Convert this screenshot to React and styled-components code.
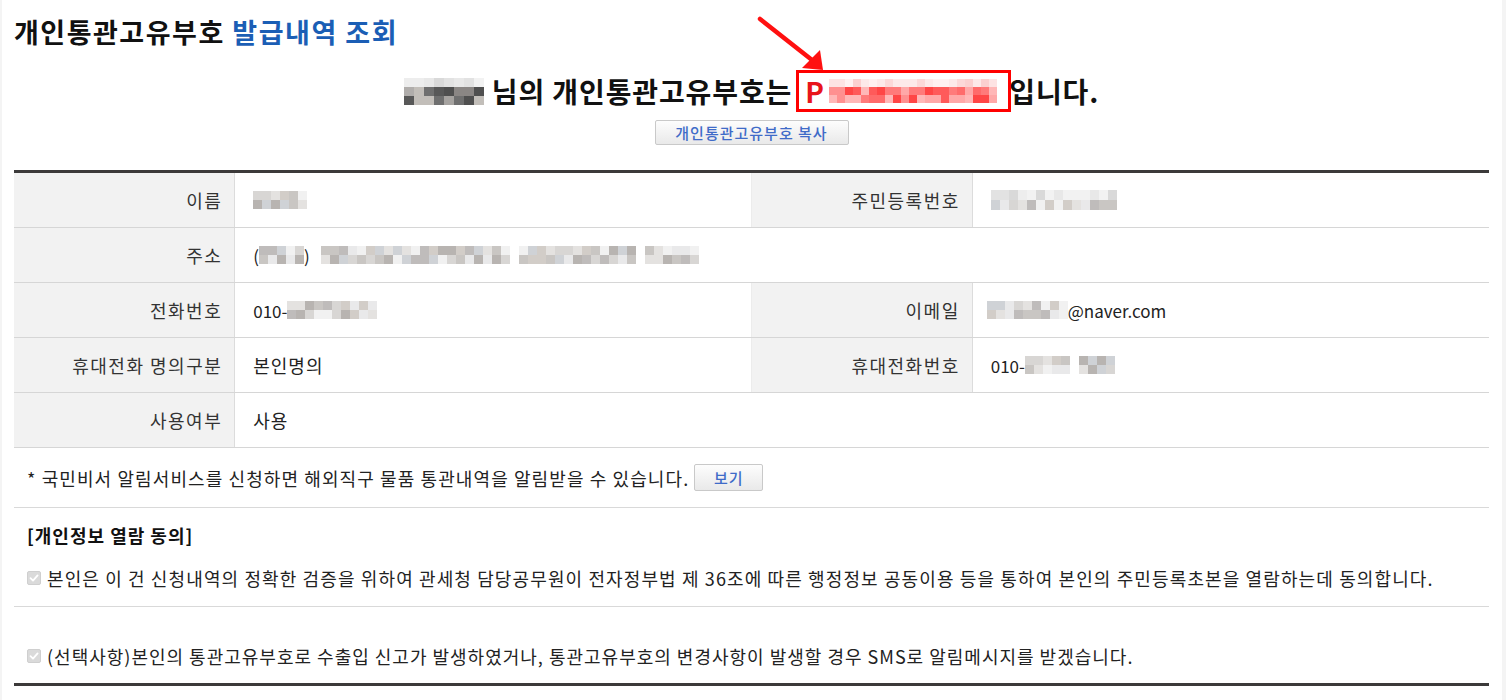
import React from 'react';
import styled, { createGlobalStyle } from 'styled-components';

const GlobalStyle = createGlobalStyle`
  html, body {
    margin: 0;
    padding: 0;
    background: #f4f4f4;
  }
  body {
    font-family: "Noto Sans CJK KR", "Noto Sans", sans-serif;
    color: #222;
  }
`;

const Page = styled.div`
  margin: 0 4px 0 2px;
  padding: 14px 13px 0 12px;
  min-height: 700px;
  box-sizing: border-box;
  background: #fff;
`;

const Title = styled.h1`
  margin: 0;
  height: 36px;
  line-height: 36px;
  font-size: 27px;
  font-weight: 700;
  letter-spacing: 1.5px;
  color: #111;
`;

const Blue = styled.span`
  color: #1b5eb5;
`;

const Hero = styled.div`
  margin-top: 20px;
  display: flex;
  justify-content: center;
  align-items: center;
  height: 42px;
  font-size: 28px;
  font-weight: 700;
  color: #111;
  letter-spacing: 0.9px;
`;

const HeroText = styled.span`
  margin-left: ${p => p.$gap || 0}px;
  margin-right: ${p => p.$after || 0}px;
  white-space: nowrap;
`;

const CodeBox = styled.div`
  position: relative;
  display: flex;
  align-items: center;
  width: 215px;
  height: 42px;
  box-sizing: border-box;
  border: 3px solid #ff0000;
  padding-left: 6px;
  color: #e8141b;
  gap: 4px;
`;

const Arrow = styled.svg`
  position: absolute;
  left: -45px;
  top: -60px;
  overflow: visible;
`;

const CopyRow = styled.div`
  display: flex;
  justify-content: center;
  margin-top: 8px;
`;

const GrayButton = styled.button`
  height: ${p => p.$h || 25}px;
  width: ${p => p.$w}px;
  padding: 0;
  border: 1px solid #c9c9c9;
  border-radius: 2px;
  background: linear-gradient(#fdfdfd, #e9e9e9);
  color: #3f6bc8;
  font-family: inherit;
  font-size: 15px;
  font-weight: 500;
  letter-spacing: 1px;
  cursor: pointer;
`;

const InfoTable = styled.div`
  margin-top: 25px;
  border-top: 3px solid #3c3a3a;
`;

const Row = styled.div`
  display: grid;
  grid-template-columns: 15% 35% 15% 35%;
  height: 55px;
  border-bottom: 1px solid #d6d6d6;
  box-sizing: border-box;
`;

const Label = styled.div`
  display: flex;
  align-items: center;
  justify-content: flex-end;
  padding-right: 12px;
  background: #f2f2f2;
  border-right: 1px solid #dcdcdc;
  font-size: 18px;
  letter-spacing: 1.5px;
  color: #333;
`;

const Value = styled.div`
  grid-column: span ${p => p.$span || 1};
  display: flex;
  align-items: center;
  padding-left: ${p => p.$pad || 18}px;
  font-size: 18px;
  letter-spacing: 1px;
  color: #222;
  ${p => (p.$line ? 'border-right: 1px solid #ececec;' : '')}
`;

const Latin = styled.span`
  font-size: 17px;
  letter-spacing: 0;
`;

const Notice = styled.div`
  display: flex;
  align-items: center;
  height: 59px;
  padding-left: 13px;
  font-size: 18px;
  letter-spacing: 1.1px;
  color: #222;
  gap: 5px;
`;

const Divider = styled.div`
  height: 1px;
  background: #d9d9d9;
`;

const ConsentTitle = styled.div`
  margin-top: 15px;
  padding-left: 13px;
  line-height: 24px;
  font-size: 18px;
  letter-spacing: 1px;
  font-weight: 700;
  color: #111;
`;

const CheckRow = styled.label`
  display: flex;
  align-items: center;
  gap: 6px;
  margin-top: ${p => p.$top}px;
  margin-bottom: ${p => p.$bottom}px;
  padding-left: 13px;
  line-height: 24px;
  font-size: 18px;
  letter-spacing: ${p => p.$ls}px;
  color: #222;
  white-space: nowrap;
`;

const CheckBox = styled.span`
  display: inline-flex;
  align-items: center;
  justify-content: center;
  width: 14px;
  height: 14px;
  box-sizing: border-box;
  border-radius: 2px;
  border: 1px solid #cfcfcf;
  background: #dadada;
  flex-shrink: 0;
`;

const BottomRule = styled.div`
  height: 3px;
  background: #3c3a3a;
`;

const MosaicGrid = styled.span`
  display: inline-grid;
  grid-template-columns: repeat(${p => p.$cols}, ${p => p.$cell}px);
  grid-auto-rows: ${p => p.$cellH || p.$cell}px;
  margin: 0 ${p => p.$mr || 0}px 0 ${p => p.$ml || 0}px;
  flex-shrink: 0;
`;

const GRAYS = ['#c9c6c3', '#d8d6d4', '#bfbcbb', '#e4e2e0', '#cfd2d6', '#b8b4b1', '#e9e9ea', '#d2cdc8', '#f1f1f1'];
const LIGHT = ['#e8e8e8', '#f2f2f2', '#e2e2e2', '#ededed', '#d9d9d9'];
const DARK = ['#6f6f6f', '#9a9898', '#585858', '#c2beb9', '#8a8684', '#b0adab', '#4f4f4f', '#a6a3a0'];
const PINK = ['#fde3e3', '#fbd0d0', '#fff1f1', '#fcd8d8', '#fde9e9'];
const RED = ['#ff5a5a', '#ff7a7a', '#ff9090', '#ff4646', '#ffa8a8', '#ff6b6b', '#ffb7b7'];

const pick = (list, i, seed) => list[Math.abs((i * 7919 + seed * 131 + ((i * i) % 13)) % list.length)];

const Mosaic = ({ cols, rows, cell, cellH, seed = 1, palettes, ml, mr, blank = [] }) => {
  const cells = [];
  for (let r = 0; r < rows; r++) {
    const pal = palettes[Math.min(r, palettes.length - 1)];
    for (let c = 0; c < cols; c++) {
      const i = r * cols + c;
      const bg = blank.includes(c) ? 'transparent' : pick(pal, i, seed);
      cells.push(<span key={i} style={{ background: bg }} />);
    }
  }
  return (
    <MosaicGrid $cols={cols} $cell={cell} $cellH={cellH} $ml={ml} $mr={mr}>
      {cells}
    </MosaicGrid>
  );
};

const Check = () => (
  <CheckBox>
    <svg width="10" height="10" viewBox="0 0 10 10">
      <path d="M1.5 5.2 L4 7.6 L8.6 2.4" fill="none" stroke="#fff" strokeWidth="1.8" strokeLinecap="round" strokeLinejoin="round" />
    </svg>
  </CheckBox>
);

export default function App() {
  return (
    <>
      <GlobalStyle />
      <Page>
        <Title>
          개인통관고유부호 <Blue>발급내역 조회</Blue>
        </Title>

        <Hero>
          <Mosaic cols={8} rows={3} cell={10} cellH={9} seed={3} palettes={[LIGHT, DARK, DARK]} />
          <HeroText $gap={8} $after={4}>님의 개인통관고유부호는</HeroText>
          <CodeBox>
            <span>P</span>
            <Mosaic cols={21} rows={3} cell={8} seed={5} palettes={[PINK, RED, RED]} />
            <Arrow width="80" height="60" viewBox="0 0 80 60">
              <line x1="6" y1="6" x2="58" y2="47" stroke="#ff1010" strokeWidth="4.5" strokeLinecap="round" />
              <polygon points="69,57 48,55 66,37" fill="#ff1010" />
            </Arrow>
          </CodeBox>
          <HeroText $gap={-2}>입니다.</HeroText>
        </Hero>

        <CopyRow>
          <GrayButton $w={194}>개인통관고유부호 복사</GrayButton>
        </CopyRow>

        <InfoTable>
          <Row>
            <Label>이름</Label>
            <Value $line>
              <Mosaic cols={6} rows={2} cell={9} seed={2} palettes={[GRAYS]} />
            </Value>
            <Label>주민등록번호</Label>
            <Value>
              <Mosaic cols={14} rows={2} cell={9} cellH={10} seed={7} palettes={[LIGHT, GRAYS]} />
            </Value>
          </Row>
          <Row>
            <Label>주소</Label>
            <Value $span={3}>
              <Latin>(</Latin>
              <Mosaic cols={5} rows={2} cell={9} seed={4} palettes={[GRAYS]} />
              <Latin>)</Latin>
              <Mosaic cols={42} rows={2} cell={9} seed={9} ml={11} palettes={[GRAYS]} blank={[21, 35]} />
            </Value>
          </Row>
          <Row>
            <Label>전화번호</Label>
            <Value $line>
              <Latin>010-</Latin>
              <Mosaic cols={10} rows={2} cell={9} seed={6} palettes={[GRAYS]} />
            </Value>
            <Label>이메일</Label>
            <Value $pad={14}>
              <Mosaic cols={9} rows={2} cell={9} seed={8} palettes={[GRAYS]} />
              <Latin>@naver.com</Latin>
            </Value>
          </Row>
          <Row>
            <Label>휴대전화 명의구분</Label>
            <Value $line>본인명의</Value>
            <Label>휴대전화번호</Label>
            <Value>
              <Latin>010-</Latin>
              <Mosaic cols={10} rows={2} cell={9} seed={11} palettes={[GRAYS]} blank={[5]} />
            </Value>
          </Row>
          <Row>
            <Label>사용여부</Label>
            <Value $span={3}>사용</Value>
          </Row>
        </InfoTable>

        <Notice>
          * 국민비서 알림서비스를 신청하면 해외직구 물품 통관내역을 알림받을 수 있습니다.
          <GrayButton $w={69} $h={27}>보기</GrayButton>
        </Notice>
        <Divider />

        <ConsentTitle>[개인정보 열람 동의]</ConsentTitle>
        <CheckRow $top={19} $bottom={16} $ls={1.12}>
          <Check />
          본인은 이 건 신청내역의 정확한 검증을 위하여 관세청 담당공무원이 전자정부법 제 36조에 따른 행정정보 공동이용 등을 통하여 본인의 주민등록초본을 열람하는데 동의합니다.
        </CheckRow>
        <Divider />
        <CheckRow $top={37} $bottom={15} $ls={1}>
          <Check />
          (선택사항)본인의 통관고유부호로 수출입 신고가 발생하였거나, 통관고유부호의 변경사항이 발생할 경우 SMS로 알림메시지를 받겠습니다.
        </CheckRow>
        <BottomRule />
      </Page>
    </>
  );
}
